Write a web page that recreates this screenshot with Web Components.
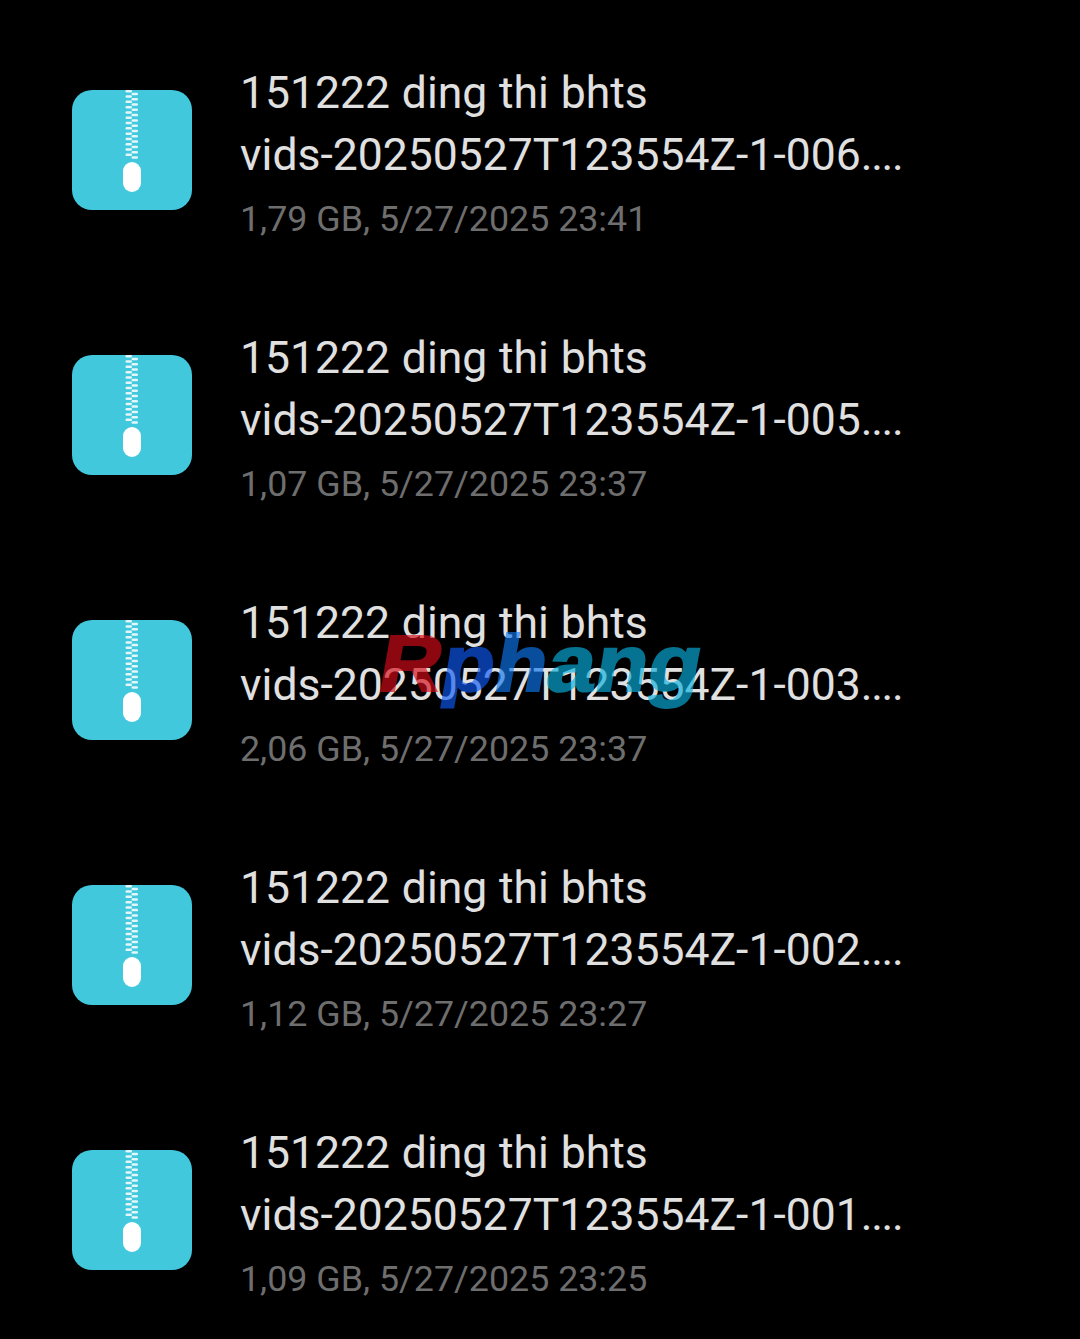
<!DOCTYPE html>
<html lang="en">
<head>
<meta charset="utf-8">
<title>Files</title>
<style>
  html, body { margin: 0; padding: 0; background: #000; }
  body { width: 1080px; height: 1339px; overflow: hidden; font-family: Roboto, "Liberation Sans", sans-serif; }
</style>
</head>
<body>
<file-list>
  <file-row><span slot="name">vids-20250527T123554Z-1-006</span><span slot="meta">1,79 GB, 5/27/2025 23:41</span></file-row>
  <file-row><span slot="name">vids-20250527T123554Z-1-005</span><span slot="meta">1,07 GB, 5/27/2025 23:37</span></file-row>
  <file-row><span slot="name">vids-20250527T123554Z-1-003</span><span slot="meta">2,06 GB, 5/27/2025 23:37</span></file-row>
  <file-row><span slot="name">vids-20250527T123554Z-1-002</span><span slot="meta">1,12 GB, 5/27/2025 23:27</span></file-row>
  <file-row><span slot="name">vids-20250527T123554Z-1-001</span><span slot="meta">1,09 GB, 5/27/2025 23:25</span></file-row>
</file-list>
<water-mark></water-mark>
<script>
class zipIcon extends HTMLElement {
  constructor() {
    super();
    this.attachShadow({ mode: 'open' });
  }

  connectedCallback() {
    let teeth = '';
    for (let i = 0; i < 26; i++) {
      const x = i % 2 === 0 ? 53.5 : 59.5;
      teeth += `<rect x="${x}" y="${i * 2.65}" width="6.5" height="2.5" rx="1.2" fill="#e2f7fa"/>`;
    }
    this.shadowRoot.innerHTML = `
      <style>
        :host { display: block; width: 120px; height: 120px; }
        svg { display: block; }
      </style>
      <svg width="120" height="120" viewBox="0 0 120 120">
        <rect width="120" height="120" rx="20" fill="#41c8dc"/>
        ${teeth}
        <rect x="51" y="72" width="18" height="30" rx="9" fill="#fff"/>
      </svg>
    `;
  }
}

class fileRow extends HTMLElement {
  constructor() {
    super();
    this.attachShadow({ mode: 'open' });
  }

  connectedCallback() {
    this.shadowRoot.innerHTML = `
      <style>
        :host { display: flex; height: 265px; box-sizing: border-box; }
        zip-icon { margin: 28px 48px 0 0; flex: none; }
        .title { font-size: 44.5px; line-height: 62px; color: #e0e0e0; white-space: nowrap; word-spacing: 0.7px; }
        .dots { letter-spacing: -1.3px; }
        .meta { font-size: 35.8px; line-height: 66px; color: #6e6e6e; white-space: nowrap; }
      </style>
      <zip-icon></zip-icon>
      <div>
        <div class="title">151222 ding thi bhts</div>
        <div class="title"><slot name="name"></slot><span class="dots">....</span></div>
        <div class="meta"><slot name="meta"></slot></div>
      </div>
    `;
  }
}

class fileList extends HTMLElement {
  constructor() {
    super();
    this.attachShadow({ mode: 'open' });
  }

  connectedCallback() {
    this.shadowRoot.innerHTML = `
      <style>
        :host { display: block; padding: 62px 0 0 72px; }
      </style>
      <slot></slot>
    `;
  }
}

class waterMark extends HTMLElement {
  constructor() {
    super();
    this.attachShadow({ mode: 'open' });
  }

  connectedCallback() {
    this.shadowRoot.innerHTML = `
      <style>
        :host { position: absolute; left: 376px; top: 620px; display: block; white-space: nowrap; opacity: .65;
          font: 700 80px/88px "Liberation Sans", sans-serif; -webkit-text-stroke: 2px currentColor;
          transform-origin: 0 70px; transform: skewX(-10deg) scaleX(1.08); }
        .r { color: rgb(215, 12, 25); }
        .p { color: rgb(15, 90, 246); }
        .h { color: rgb(15, 120, 240); }
        .a { color: rgb(8, 177, 223); }
      </style>
      <span class="r">R</span><span class="p">p</span><span class="h">h</span><span class="a">ang</span>
    `;
  }
}

customElements.define('zip-icon', zipIcon);
customElements.define('file-row', fileRow);
customElements.define('file-list', fileList);
customElements.define('water-mark', waterMark);
</script>
</body>
</html>
